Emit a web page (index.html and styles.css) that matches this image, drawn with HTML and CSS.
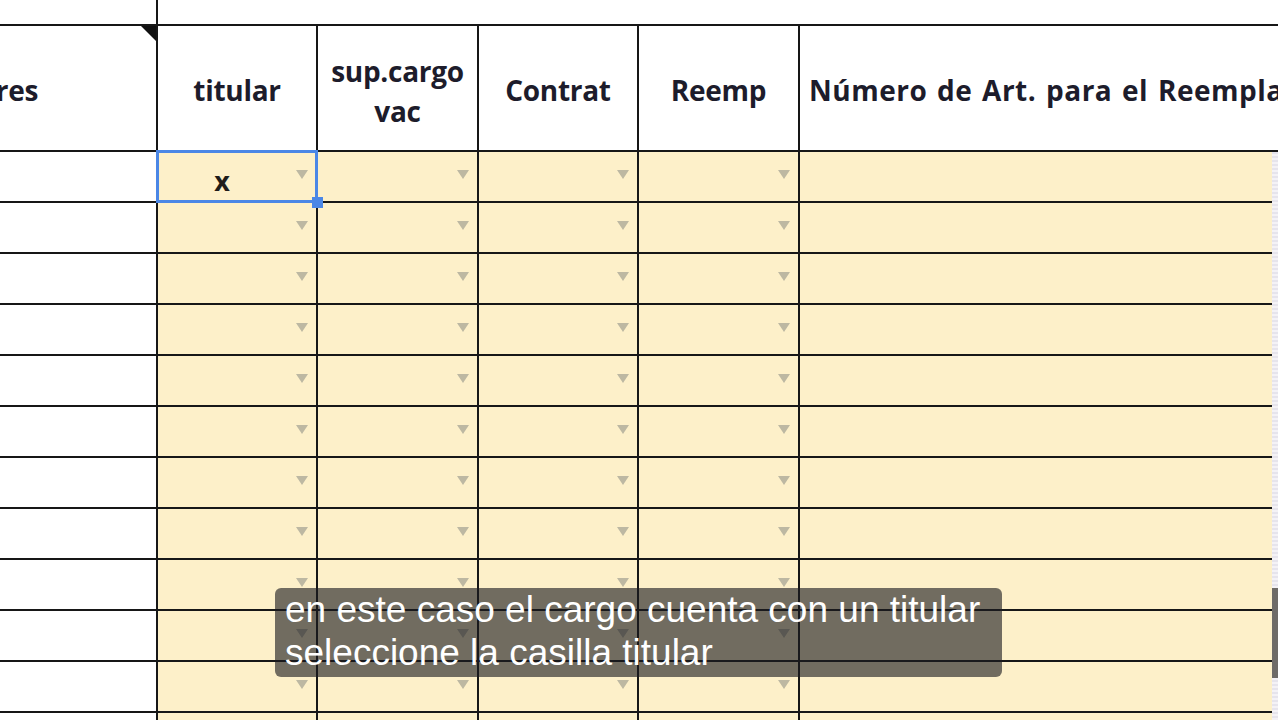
FILE: index.html
```html
<!DOCTYPE html>
<html lang="es">
<head>
<meta charset="utf-8">
<title>Planilla</title>
<link rel="stylesheet" href="styles.css">
</head>
<body>
<div class="stage">
  <div class="sheet">
    <div class="cell band"></div>
    <div class="cell band band-wide"></div>

    <div class="cell head head-first"><span>Nombres</span><i class="marker"></i></div>
    <div class="cell head">titular</div>
    <div class="cell head two">sup.cargo<br>vac</div>
    <div class="cell head">Contrat</div>
    <div class="cell head">Reemp</div>
    <div class="cell head head-last"><span>Número de Art. para el Reemplazo</span></div>

    <div class="cell name"></div>
    <div class="cell drop selected"><span class="val">x</span><i class="arrow"></i><i class="handle"></i></div>
    <div class="cell drop"><i class="arrow"></i></div>
    <div class="cell drop"><i class="arrow"></i></div>
    <div class="cell drop"><i class="arrow"></i></div>
    <div class="cell fill"></div>

    <div class="cell name"></div><div class="cell drop"><i class="arrow"></i></div><div class="cell drop"><i class="arrow"></i></div><div class="cell drop"><i class="arrow"></i></div><div class="cell drop"><i class="arrow"></i></div><div class="cell fill"></div>
    <div class="cell name"></div><div class="cell drop"><i class="arrow"></i></div><div class="cell drop"><i class="arrow"></i></div><div class="cell drop"><i class="arrow"></i></div><div class="cell drop"><i class="arrow"></i></div><div class="cell fill"></div>
    <div class="cell name"></div><div class="cell drop"><i class="arrow"></i></div><div class="cell drop"><i class="arrow"></i></div><div class="cell drop"><i class="arrow"></i></div><div class="cell drop"><i class="arrow"></i></div><div class="cell fill"></div>
    <div class="cell name"></div><div class="cell drop"><i class="arrow"></i></div><div class="cell drop"><i class="arrow"></i></div><div class="cell drop"><i class="arrow"></i></div><div class="cell drop"><i class="arrow"></i></div><div class="cell fill"></div>
    <div class="cell name"></div><div class="cell drop"><i class="arrow"></i></div><div class="cell drop"><i class="arrow"></i></div><div class="cell drop"><i class="arrow"></i></div><div class="cell drop"><i class="arrow"></i></div><div class="cell fill"></div>
    <div class="cell name"></div><div class="cell drop"><i class="arrow"></i></div><div class="cell drop"><i class="arrow"></i></div><div class="cell drop"><i class="arrow"></i></div><div class="cell drop"><i class="arrow"></i></div><div class="cell fill"></div>
    <div class="cell name"></div><div class="cell drop"><i class="arrow"></i></div><div class="cell drop"><i class="arrow"></i></div><div class="cell drop"><i class="arrow"></i></div><div class="cell drop"><i class="arrow"></i></div><div class="cell fill"></div>
    <div class="cell name"></div><div class="cell drop"><i class="arrow"></i></div><div class="cell drop"><i class="arrow"></i></div><div class="cell drop"><i class="arrow"></i></div><div class="cell drop"><i class="arrow"></i></div><div class="cell fill"></div>
    <div class="cell name"></div><div class="cell drop"><i class="arrow"></i></div><div class="cell drop"><i class="arrow"></i></div><div class="cell drop"><i class="arrow"></i></div><div class="cell drop"><i class="arrow"></i></div><div class="cell fill"></div>
    <div class="cell name"></div><div class="cell drop"><i class="arrow"></i></div><div class="cell drop"><i class="arrow"></i></div><div class="cell drop"><i class="arrow"></i></div><div class="cell drop"><i class="arrow"></i></div><div class="cell fill"></div>
    <div class="cell name"></div><div class="cell drop"><i class="arrow"></i></div><div class="cell drop"><i class="arrow"></i></div><div class="cell drop"><i class="arrow"></i></div><div class="cell drop"><i class="arrow"></i></div><div class="cell fill"></div>
  </div>

  <div class="edge"><i class="edge-dark"></i></div>

  <div class="caption">
    <p>en este caso el cargo cuenta con un titular</p>
    <p>seleccione la casilla titular</p>
  </div>
</div>
</body>
</html>
```

FILE: styles.css
```css
html, body {
  margin: 0;
  padding: 0;
  background: #ffffff;
  overflow: hidden;
}

.stage {
  position: relative;
  width: 1278px;
  height: 720px;
  overflow: hidden;
}

.sheet {
  display: grid;
  grid-template-columns: 156px 158px 159px 158px 159px 1fr;
  grid-template-rows: 24px 124px repeat(12, 49px);
  gap: 2px;
  background: #171717;
  width: 1278px;
}

.cell {
  background: #ffffff;
  position: relative;
}

.band-wide {
  grid-column: 2 / 7;
}

.head {
  display: flex;
  align-items: center;
  justify-content: center;
  text-align: center;
  font-family: "Open Sans", Lato, sans-serif;
  font-weight: 700;
  font-size: 28px;
  line-height: 40px;
  color: #1d1c2b;
  white-space: nowrap;
  letter-spacing: -0.3px;
  padding-top: 4px;
}

.head.two {
  padding-top: 6px;
}

.head-first {
  justify-content: flex-end;
  padding-right: 118px;
  overflow: hidden;
}

.marker {
  position: absolute;
  top: 0;
  right: 0;
  width: 0;
  height: 0;
  border-top: 15px solid #111111;
  border-left: 15px solid transparent;
}

.head-last {
  justify-content: flex-start;
  padding-left: 9px;
  padding-right: 6px;
  overflow: hidden;
  letter-spacing: 0.5px;
  word-spacing: 2px;
}

.name {
  background: #ffffff;
}

.drop, .fill {
  background: #fdf0c9;
}

.drop {
  display: flex;
  justify-content: flex-end;
  align-items: flex-start;
  padding: 18px 8px 0 0;
}

.arrow {
  display: block;
  width: 0;
  height: 0;
  border-left: 6px solid transparent;
  border-right: 6px solid transparent;
  border-top: 9px solid #bdb8a2;
}

.selected {
  z-index: 2;
}

.selected::after {
  content: "";
  position: absolute;
  left: -2px;
  top: -2px;
  right: -2px;
  bottom: -2px;
  border: 3px solid #4b87e6;
  pointer-events: none;
}

.val {
  position: absolute;
  left: 0;
  right: 30px;
  top: 9px;
  text-align: center;
  font-family: "Open Sans", Lato, sans-serif;
  font-weight: 700;
  font-size: 27px;
  line-height: 40px;
  color: #1f1d1a;
}

.handle {
  position: absolute;
  right: -7px;
  bottom: -7px;
  width: 11px;
  height: 11px;
  background: #4b87e6;
  z-index: 3;
}

.edge {
  position: absolute;
  right: 0;
  top: 152px;
  width: 6px;
  bottom: 0;
  background: repeating-linear-gradient(180deg, #e6e4ec 0 2px, #f4f2f6 2px 4px);
}

.edge-dark {
  position: absolute;
  left: 0;
  right: 0;
  top: 436px;
  height: 90px;
  background: #6e6b68;
}

.caption {
  position: absolute;
  left: 275px;
  top: 588px;
  width: 727px;
  height: 89px;
  box-sizing: border-box;
  padding: 0 0 0 10px;
  border-radius: 6px;
  background: rgba(28, 28, 32, 0.62);
  font-family: "Liberation Sans", Arial, sans-serif;
  font-size: 37px;
  line-height: 43px;
  color: #ffffff;
}

.caption p {
  margin: 0;
  white-space: nowrap;
}
```
